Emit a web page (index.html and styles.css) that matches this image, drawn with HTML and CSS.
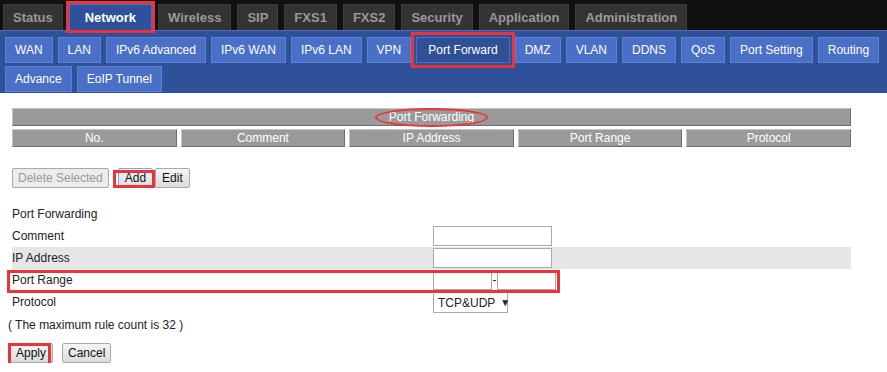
FILE: index.html
```html
<!DOCTYPE html>
<html lang="en">
<head>
    <meta charset="UTF-8">
    <meta name="viewport" content="width=device-width, initial-scale=1.0">
    <title>Port Forward</title>
    <link rel="stylesheet" href="styles.css">
</head>
<body>
    <div class="topbar">
        <div class="tab">Status</div>
        <div class="tab active">Network</div>
        <div class="tab">Wireless</div>
        <div class="tab">SIP</div>
        <div class="tab">FXS1</div>
        <div class="tab">FXS2</div>
        <div class="tab">Security</div>
        <div class="tab">Application</div>
        <div class="tab">Administration</div>
    </div>

    <div class="subnav">
        <div class="subtab">WAN</div>
        <div class="subtab">LAN</div>
        <div class="subtab">IPv6 Advanced</div>
        <div class="subtab">IPv6 WAN</div>
        <div class="subtab">IPv6 LAN</div>
        <div class="subtab">VPN</div>
        <div class="subtab active">Port Forward</div>
        <div class="subtab">DMZ</div>
        <div class="subtab">VLAN</div>
        <div class="subtab">DDNS</div>
        <div class="subtab">QoS</div>
        <div class="subtab">Port Setting</div>
        <div class="subtab">Routing</div>
        <div class="subtab">Advance</div>
        <div class="subtab">EoIP Tunnel</div>
    </div>

    <div class="content">
        <div class="list-title"><span class="ring">Port Forwarding</span></div>
        <div class="list-head">
            <div class="cell">No.</div>
            <div class="cell">Comment</div>
            <div class="cell">IP Address</div>
            <div class="cell">Port Range</div>
            <div class="cell">Protocol</div>
        </div>

        <div class="list-actions">
            <button class="btn" disabled>Delete Selected</button>
            <button class="btn add">Add</button>
            <button class="btn edit">Edit</button>
        </div>

        <div class="form">
            <div class="row"><span class="label">Port Forwarding</span></div>
            <div class="row">
                <label class="label" for="comment">Comment</label>
                <input type="text" id="comment" class="field">
            </div>
            <div class="row shaded">
                <label class="label" for="ip">IP Address</label>
                <input type="text" id="ip" class="field">
            </div>
            <div class="row marked">
                <label class="label" for="port-from">Port Range</label>
                <div class="range">
                    <input type="text" id="port-from" class="field short">
                    <span class="dash">-</span>
                    <input type="text" class="field short">
                </div>
            </div>
            <div class="row">
                <span class="label">Protocol</span>
                <div class="select">TCP&amp;UDP<span class="arrow">&#9660;</span></div>
            </div>
            <div class="note">( The maximum rule count is 32 )</div>
            <div class="form-actions">
                <button class="btn apply">Apply</button>
                <button class="btn">Cancel</button>
            </div>
        </div>
    </div>
</body>
</html>
```

FILE: styles.css
```css
body{
    margin: 0;
    font-family: Tahoma, "Liberation Sans", Arial, sans-serif;
    font-size: 12px;
    color: #222;
    background: #fff;
}

/* main tabs */
.topbar{
    display: flex;
    gap: 6px;
    height: 30px;
    box-sizing: border-box;
    padding: 4px 0 0 3px;
    background: #111;
}
.tab{
    height: 26px;
    box-sizing: border-box;
    padding: 0 9px;
    line-height: 26px;
    background: #333;
    border: 1px solid #3d3d3d;
    border-bottom: none;
    color: #999;
    font-size: 13px;
    font-weight: bold;
}
.tab.active{
    padding: 0 15px;
    background: #2f5199;
    border-color: #4a6fc6;
    color: #fff;
    outline: 3px solid #ee3338;
}

/* sub tabs */
.subnav{
    display: flex;
    flex-wrap: wrap;
    column-gap: 5px;
    row-gap: 3px;
    padding: 6px 5px 1px;
    background: #2f5199;
    border-top: 1px solid #4a6fc6;
}
.subtab{
    height: 26px;
    box-sizing: border-box;
    padding: 0 9px;
    line-height: 24px;
    background: #4a6fc6;
    border: 1px solid #5e80d0;
    color: #fff;
    font-size: 12px;
}
.subtab.active{
    padding: 0 11px;
    background: #2f4f97;
    border-color: #4a6fc6;
    outline: 3px solid #ee3338;
    outline-offset: 2px;
}

.content{
    padding: 15px 36px 0 12px;
}

/* list table */
.list-title, .cell{
    height: 18px;
    box-sizing: border-box;
    line-height: 16px;
    text-align: center;
    color: #fff;
    background: #9a9a9a;
    border: 1px solid;
    border-color: #c4c4c4 #6e6e6e #6e6e6e #c4c4c4;
}
.ring{
    position: relative;
}
.ring::after{
    content: "";
    position: absolute;
    top: -2px;
    bottom: -3px;
    left: -14px;
    right: -14px;
    border: 2px solid #ee3338;
    border-radius: 50%;
}
.list-head{
    display: grid;
    grid-template-columns: repeat(5, 1fr);
    gap: 4px;
    margin-top: 3px;
}

/* buttons */
.btn{
    height: 20px;
    box-sizing: border-box;
    padding: 0 5px;
    font-family: inherit;
    font-size: 12px;
    color: #111;
    background: linear-gradient(#f6f6f6, #dcdcdc);
    border: 1px solid #a9a9a9;
    border-radius: 2px;
}
.btn:disabled{
    color: #9a9a9a;
    background: #ececec;
}
.list-actions{
    display: flex;
    margin-top: 21px;
}
.add{
    position: relative;
    margin-left: 9px;
    padding: 0 6px;
    border-color: #7ba6e8;
}
.add::after{
    content: "";
    position: absolute;
    top: 1px;
    bottom: -1px;
    left: -6px;
    right: -3px;
    border: 3px solid #ee3338;
}
.edit{
    margin-left: 2px;
    padding: 0 6px;
}

/* form */
.form{
    margin-top: 15px;
}
.row{
    display: flex;
    align-items: center;
    height: 22px;
}
.row.shaded{
    background: #e6e6e6;
}
.row.marked{
    position: relative;
}
.row.marked::after{
    content: "";
    position: absolute;
    top: 1px;
    bottom: -2px;
    left: -5px;
    width: 547px;
    border: 3px solid #ee3338;
}
.label{
    width: 421px;
    flex: none;
}
.field{
    width: 119px;
    height: 20px;
    box-sizing: border-box;
    margin: 0;
    border: 1px solid #a9a9a9;
    background: #fff;
}
.field.short{
    width: 59px;
}
.range{
    display: flex;
    align-items: center;
}
.dash{
    width: 5px;
    text-align: center;
}
.select{
    display: flex;
    align-items: center;
    width: 75px;
    height: 20px;
    box-sizing: border-box;
    margin-top: 1px;
    padding-left: 4px;
    white-space: nowrap;
    border: 1px solid #a9a9a9;
    border-top-color: #fff;
    background: #fff;
}
.arrow{
    margin-left: 5px;
    font-size: 10px;
}
.note{
    margin: 2px 0 0 -4px;
    height: 20px;
    line-height: 20px;
}
.form-actions{
    display: flex;
    gap: 9px;
    margin-top: 8px;
}
.apply{
    position: relative;
    margin-left: -3px;
    padding: 0 6px;
}
.apply::after{
    content: "";
    position: absolute;
    top: -1px;
    bottom: -4px;
    left: -2px;
    right: 1px;
    border: 3px solid #ee3338;
}
```
